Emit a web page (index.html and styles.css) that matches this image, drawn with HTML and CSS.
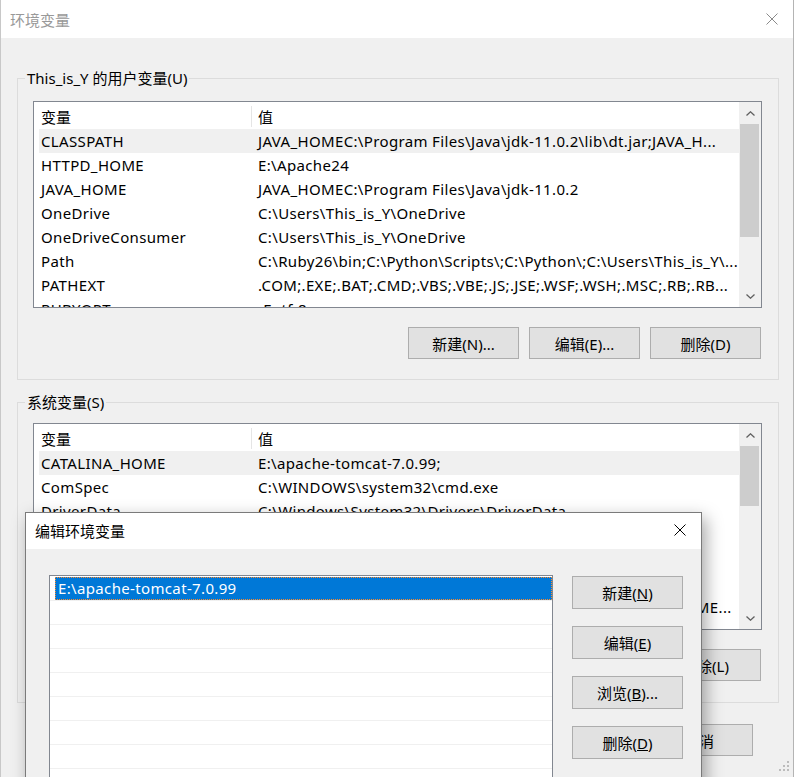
FILE: index.html
```html
<!DOCTYPE html>
<html lang="zh-CN">
  <head>
    <meta charset="UTF-8" />
    <title>环境变量</title>
    <link rel="stylesheet" href="styles.css">
  </head>
  <body>
    <div class="window">
      <div class="titlebar">
        <span class="title">环境变量</span>
        <svg class="close" width="12" height="12" viewBox="0 0 12 12">
          <path d="M0.5 0.5 L11.5 11.5 M11.5 0.5 L0.5 11.5" stroke="#8a8a8a" stroke-width="1" fill="none" />
        </svg>
      </div>

      <div class="body">
        <fieldset class="group">
          <legend>This_is_Y 的用户变量(U)</legend>
          <div class="listview first">
            <div class="lv-main">
              <div class="lv-head"><span class="c1">变量</span><span class="c2">值</span></div>
              <div class="lv-row sel"><span class="c1">CLASSPATH</span><span class="c2">JAVA_HOMEC:\Program Files\Java\jdk-11.0.2\lib\dt.jar;JAVA_H...</span></div>
              <div class="lv-row"><span class="c1">HTTPD_HOME</span><span class="c2">E:\Apache24</span></div>
              <div class="lv-row"><span class="c1">JAVA_HOME</span><span class="c2">JAVA_HOMEC:\Program Files\Java\jdk-11.0.2</span></div>
              <div class="lv-row"><span class="c1">OneDrive</span><span class="c2">C:\Users\This_is_Y\OneDrive</span></div>
              <div class="lv-row"><span class="c1">OneDriveConsumer</span><span class="c2">C:\Users\This_is_Y\OneDrive</span></div>
              <div class="lv-row"><span class="c1">Path</span><span class="c2">C:\Ruby26\bin;C:\Python\Scripts\;C:\Python\;C:\Users\This_is_Y\...</span></div>
              <div class="lv-row"><span class="c1">PATHEXT</span><span class="c2">.COM;.EXE;.BAT;.CMD;.VBS;.VBE;.JS;.JSE;.WSF;.WSH;.MSC;.RB;.RB...</span></div>
              <div class="lv-row"><span class="c1">RUBYOPT</span><span class="c2">-Eutf-8</span></div>
            </div>
            <div class="scrollbar">
              <div class="sb-btn">
                <svg width="9" height="5" viewBox="0 0 9 5"><path d="M0.5 4.5 L4.5 0.8 L8.5 4.5" stroke="#606060" stroke-width="1.3" fill="none" /></svg>
              </div>
              <div class="sb-track"><div class="sb-thumb" style="height: 113px"></div></div>
              <div class="sb-btn">
                <svg width="9" height="5" viewBox="0 0 9 5"><path d="M0.5 0.5 L4.5 4.2 L8.5 0.5" stroke="#606060" stroke-width="1.3" fill="none" /></svg>
              </div>
            </div>
          </div>
          <div class="btns">
            <button class="btn">新建(N)...</button>
            <button class="btn">编辑(E)...</button>
            <button class="btn">删除(D)</button>
          </div>
        </fieldset>

        <fieldset class="group second">
          <legend>系统变量(S)</legend>
          <div class="listview">
            <div class="lv-main">
              <div class="lv-head"><span class="c1">变量</span><span class="c2">值</span></div>
              <div class="lv-row sel"><span class="c1">CATALINA_HOME</span><span class="c2">E:\apache-tomcat-7.0.99;</span></div>
              <div class="lv-row"><span class="c1">ComSpec</span><span class="c2">C:\WINDOWS\system32\cmd.exe</span></div>
              <div class="lv-row"><span class="c1">DriverData</span><span class="c2">C:\Windows\System32\Drivers\DriverData</span></div>
              <div class="lv-row"><span class="c1">JAVA_HOME</span><span class="c2">C:\Program Files\Java\jdk-11.0.2</span></div>
              <div class="lv-row"><span class="c1">NUMBER_OF_PROCESSORS</span><span class="c2">8</span></div>
              <div class="lv-row"><span class="c1">OS</span><span class="c2">Windows_NT</span></div>
              <div class="lv-row"><span class="c1">Path</span><span class="c2">C:\WINDOWS\system32;%JAVA_HOME%\bin;%CATALINA_HOME...</span></div>
              <div class="lv-row"><span class="c1">PATHEXT</span><span class="c2">.COM;.EXE;.BAT</span></div>
            </div>
            <div class="scrollbar">
              <div class="sb-btn">
                <svg width="9" height="5" viewBox="0 0 9 5"><path d="M0.5 4.5 L4.5 0.8 L8.5 4.5" stroke="#606060" stroke-width="1.3" fill="none" /></svg>
              </div>
              <div class="sb-track"><div class="sb-thumb" style="height: 60px"></div></div>
              <div class="sb-btn">
                <svg width="9" height="5" viewBox="0 0 9 5"><path d="M0.5 0.5 L4.5 4.2 L8.5 0.5" stroke="#606060" stroke-width="1.3" fill="none" /></svg>
              </div>
            </div>
          </div>
          <div class="btns">
            <button class="btn">新建(W)...</button>
            <button class="btn">编辑(I)...</button>
            <button class="btn">删除(L)</button>
          </div>
        </fieldset>

        <div class="footer">
          <button class="btn wide">确定</button>
          <button class="btn wide">取消</button>
        </div>
      </div>

      <svg class="grip" width="12" height="12" viewBox="0 0 12 12">
        <rect x="8" y="0" width="2" height="2" fill="#bcbcbc" />
        <rect x="4" y="4" width="2" height="2" fill="#bcbcbc" />
        <rect x="8" y="4" width="2" height="2" fill="#bcbcbc" />
        <rect x="0" y="8" width="2" height="2" fill="#bcbcbc" />
        <rect x="4" y="8" width="2" height="2" fill="#bcbcbc" />
        <rect x="8" y="8" width="2" height="2" fill="#bcbcbc" />
      </svg>

      <!-- edit dialog on top of the main window -->
      <div class="dialog">
        <div class="dlg-title">
          <span>编辑环境变量</span>
          <svg class="close" width="12" height="12" viewBox="0 0 12 12">
            <path d="M0.5 0.5 L11.5 11.5 M11.5 0.5 L0.5 11.5" stroke="#000" stroke-width="1" fill="none" />
          </svg>
        </div>
        <div class="dlg-body">
          <div class="pathlist">
            <div class="pl-row"><span class="pl-sel">E:\apache-tomcat-7.0.99</span></div>
            <div class="pl-row"></div>
            <div class="pl-row"></div>
            <div class="pl-row"></div>
            <div class="pl-row"></div>
            <div class="pl-row"></div>
            <div class="pl-row"></div>
            <div class="pl-row"></div>
            <div class="pl-row"></div>
          </div>
          <div class="dlg-btns">
            <button class="btn tall">新建(<u>N</u>)</button>
            <button class="btn tall">编辑(<u>E</u>)</button>
            <button class="btn tall">浏览(<u>B</u>)...</button>
            <button class="btn tall">删除(<u>D</u>)</button>
          </div>
        </div>
      </div>
    </div>
  </body>
</html>
```

FILE: styles.css
```css
* {
  box-sizing: border-box;
}
html,
body {
  margin: 0;
  padding: 0;
}
body {
  width: 794px;
  height: 777px;
  overflow: hidden;
  background: #f0f0f0;
  font-family: "Noto Sans", "Noto Sans CJK SC", sans-serif;
  font-size: 15px;
  color: #000;
}

.window {
  position: relative;
  width: 794px;
  height: 777px;
  border-left: 1px solid #c8c8c8;
  border-right: 1px solid #b4b4b4;
  overflow: hidden;
}
.titlebar {
  height: 38px;
  background: #fff;
  display: flex;
  align-items: center;
  justify-content: space-between;
  padding: 0 15px 0 9px;
}
.titlebar .title {
  color: #999;
}

.body {
  padding: 30px 0 0 16px;
}
.group {
  width: 762px;
  min-width: 0;
  margin: 0;
  padding: 0 16px 20px 15px;
  border: 1px solid #dcdcdc;
}
.group legend {
  padding: 0 2px;
  margin-left: -8px;
  line-height: 21px;
}
.group.second {
  margin-top: 12px;
  padding-bottom: 21px;
}

.listview {
  display: flex;
  height: 207px;
  margin-top: 10px;
  background: #fff;
  border: 1px solid #828790;
}
.listview.first {
  margin-top: 12px;
}
.lv-main {
  flex: 1;
  min-width: 0;
  padding-left: 5px;
  overflow: hidden;
}
.lv-head {
  display: flex;
  align-items: center;
  height: 27px;
  padding-top: 2px;
}
.lv-head .c1 {
  border-right: 1px solid #e5e5e5;
}
.lv-row {
  display: flex;
  align-items: center;
  height: 24px;
  letter-spacing: 0.35px;
}
.lv-row.sel {
  background: #f0f0f0;
}
.c1 {
  width: 213px;
  flex-shrink: 0;
  padding-left: 2px;
  white-space: nowrap;
  overflow: hidden;
}
.c2 {
  flex: 1;
  min-width: 0;
  padding-left: 6px;
  white-space: nowrap;
  overflow: hidden;
}

.scrollbar {
  width: 22px;
  flex-shrink: 0;
  display: flex;
  flex-direction: column;
  background: #f0f0f0;
}
.sb-btn {
  height: 22px;
  display: flex;
  align-items: center;
  justify-content: center;
}
.sb-track {
  flex: 1;
}
.sb-thumb {
  margin: 0 2px 0 1px;
  background: #cdcdcd;
}

.btns {
  display: flex;
  justify-content: flex-end;
  gap: 10px;
  margin-top: 19px;
  padding-right: 1px;
}
.btn {
  width: 111px;
  height: 32px;
  padding: 0;
  background: #e1e1e1;
  border: 1px solid #adadad;
  font: inherit;
  color: #000;
}
.btn.wide {
  width: 108px;
}
.btn.tall {
  height: 33px;
}
.footer {
  width: 762px;
  display: flex;
  justify-content: flex-end;
  gap: 13px;
  margin-top: 21px;
  padding-right: 26px;
}

.grip {
  position: absolute;
  right: 2px;
  bottom: 4px;
}

.dialog {
  position: absolute;
  left: 24px;
  top: 512px;
  width: 677px;
  height: 290px;
  background: #f0f0f0;
  border: 1px solid #7a7a7a;
  box-shadow: 4px 6px 16px rgba(0, 0, 0, 0.35);
}
.dlg-title {
  height: 36px;
  background: #fff;
  display: flex;
  align-items: center;
  justify-content: space-between;
  padding: 0 15px 2px 9px;
}
.dlg-body {
  display: flex;
  align-items: flex-start;
  padding: 26px 18px 0 23px;
}
.pathlist {
  width: 504px;
  height: 240px;
  padding-top: 1px;
  background: #fff;
  border: 1px solid #828790;
}
.pl-row {
  height: 24px;
  border-bottom: 1px solid #f0f0f0;
}
.pl-sel {
  display: block;
  height: 23px;
  line-height: 23px;
  margin-left: 5px;
  padding-left: 3px;
  background: #0078d7;
  color: #fff;
  letter-spacing: 0.35px;
  outline: 1px dotted #ff8a2a;
  outline-offset: -1px;
}
.dlg-btns {
  display: flex;
  flex-direction: column;
  gap: 17px;
  margin: 1px 0 0 19px;
}
```
